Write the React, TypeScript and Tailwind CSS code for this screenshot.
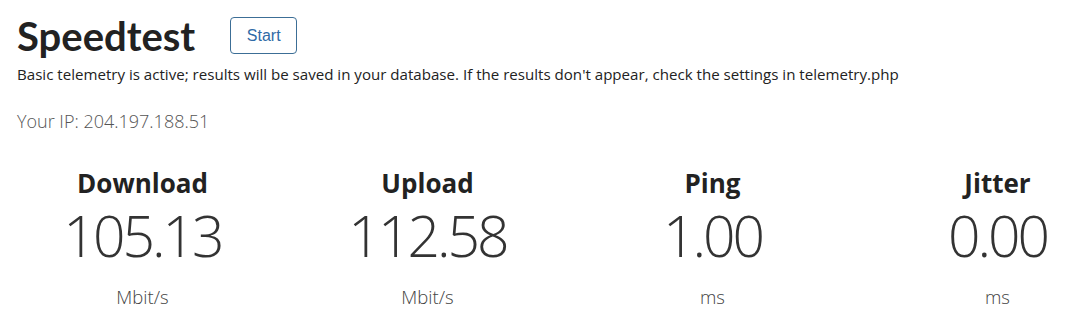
import React from "react";

const stats = [
  { label: "Download", value: "105.13", unit: "Mbit/s" },
  { label: "Upload", value: "112.58", unit: "Mbit/s" },
  { label: "Ping", value: "1.00", unit: "ms" },
  { label: "Jitter", value: "0.00", unit: "ms" },
];

export default function App() {
  return (
    <div
      className="w-[1076px] h-[321px] overflow-hidden bg-white text-[#222]"
      style={{ fontFamily: '"Open Sans", "Noto Sans", sans-serif' }}
    >
      <div className="pl-[17px] pt-[12px]">
        <div className="flex items-start gap-[35px]">
          <h1
            className="text-[40px] leading-[48px] font-bold text-[#222]"
            style={{ fontFamily: 'Lato, "Open Sans", sans-serif' }}
          >
            Speedtest
          </h1>
          <button
            className="mt-[5px] h-[37px] w-[67px] rounded-[4px] border border-[#3c6e96] text-[16px] text-[#2f6aa6]"
            style={{ fontFamily: '"Liberation Sans", Arial, sans-serif' }}
          >
            Start
          </button>
        </div>
        <p className="mt-[4px] text-[15.1px] leading-[20px] text-[#222]">
          Basic telemetry is active; results will be saved in your database. If the results don't appear, check the settings in telemetry.php
        </p>
        <p className="mt-[25px] text-[18px] leading-[24px] font-light text-[#555]">Your IP: 204.197.188.51</p>
      </div>
      <div className="mt-[34px] flex">
        {stats.map((s) => (
          <div key={s.label} className="w-[285px] shrink-0 flex flex-col items-center">
            <div className="text-[26px] leading-[32px] font-bold text-[#222]">{s.label}</div>
            <div className="mt-[2px] text-[57px] leading-[68px] font-light tracking-[-3px] text-[#333]">{s.value}</div>
            <div className="mt-[16px] text-[18.5px] leading-[24px] font-light text-[#444]">{s.unit}</div>
          </div>
        ))}
      </div>
    </div>
  );
}
